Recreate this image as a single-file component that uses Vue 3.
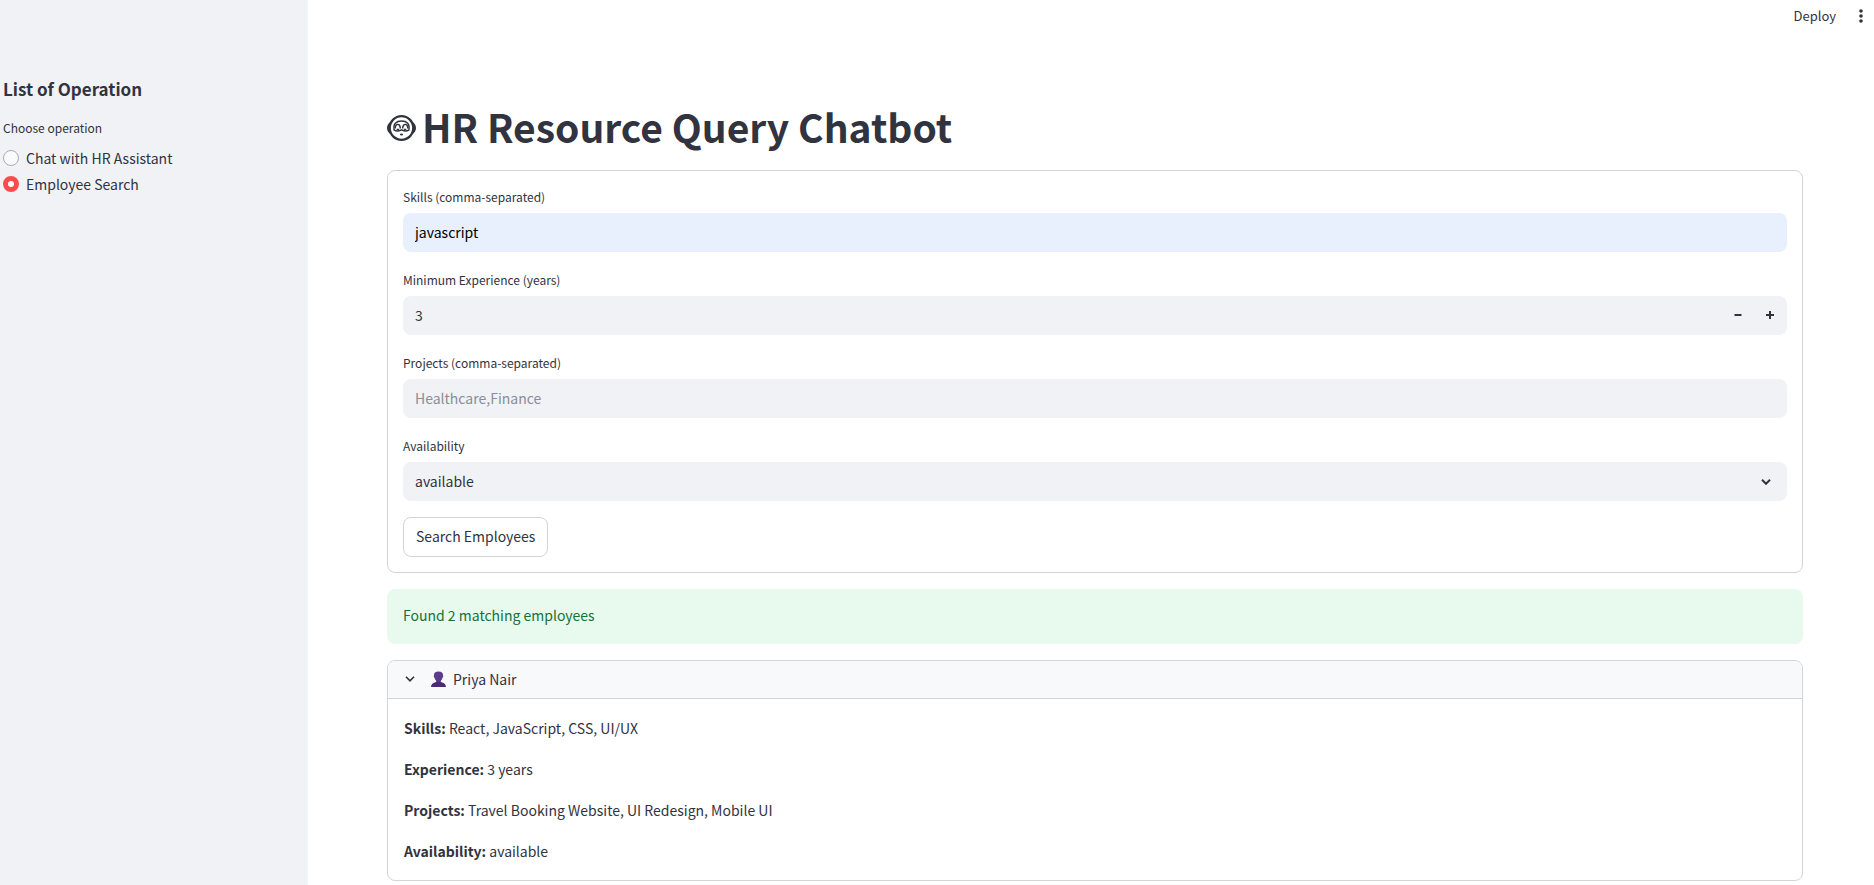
<script setup>
import { ref } from 'vue'

const operations = ['Chat with HR Assistant', 'Employee Search']
const operation = ref('Employee Search')
const skills = ref('javascript')
const experience = ref(3)
const projects = ref('')
const availability = ref('available')

const employees = [
  {
    name: 'Priya Nair',
    details: [
      ['Skills', 'React, JavaScript, CSS, UI/UX'],
      ['Experience', '3 years'],
      ['Projects', 'Travel Booking Website, UI Redesign, Mobile UI'],
      ['Availability', 'available']
    ]
  }
]
</script>

<template>
  <div class="app">
    <aside class="sidebar">
      <h2>List of Operation</h2>
      <fieldset class="operations">
        <legend>Choose operation</legend>
        <label v-for="item in operations" :key="item" class="option">
          <input v-model="operation" type="radio" name="operation" :value="item" />
          <span>{{ item }}</span>
        </label>
      </fieldset>
    </aside>

    <div class="page">
      <header class="toolbar">
        <button type="button" class="deploy">Deploy</button>
        <button type="button" class="menu" aria-label="Main menu">
          <svg width="6" height="16" viewBox="0 0 6 16" fill="currentColor">
            <circle cx="3" cy="3" r="1.8" />
            <circle cx="3" cy="8" r="1.8" />
            <circle cx="3" cy="13" r="1.8" />
          </svg>
        </button>
      </header>

      <main class="content">
        <h1>
          <svg class="robot" width="29" height="28" viewBox="0 0 30 28" fill="none" stroke="currentColor" aria-hidden="true">
            <path d="M4 7.500C1.200 9 0 11.500 0 14s1.200 5 4 6.500zM26 7.500c2.800 1.500 4 4 4 6.500s-1.200 5-4 6.500z" fill="currentColor" stroke="none" />
            <circle cx="15" cy="14" r="12.200" stroke-width="2.400" fill="#fff" />
            <path d="M7.500 16.300C6 9.500 9.500 6.800 15 6.800s9 2.700 7.500 9.500c-2 1.200-5.700.9-7.500-.3-1.800 1.200-5.500 1.500-7.500.3z" stroke-width="1.500" />
            <path d="M8.500 14.500v-.9c.3-4.500 4.900-4.500 5.200 0v.9M16.300 14.500v-.9c.3-4.500 4.900-4.500 5.200 0v.9" stroke-width="1.500" />
            <path d="M10 15.500h2.500M17.500 15.500H20" stroke-width="1.500" />
            <ellipse cx="15" cy="20.800" rx="1.600" ry="1" fill="currentColor" stroke="none" />
          </svg>
          <span>HR Resource Query Chatbot</span>
        </h1>

        <form class="search" @submit.prevent>
          <div class="fields">
            <div class="field">
              <label for="skills">Skills (comma-separated)</label>
              <input id="skills" v-model="skills" class="control filled" type="text" />
            </div>
            <div class="field">
              <label for="experience">Minimum Experience (years)</label>
              <div class="control stepper">
                <input id="experience" v-model="experience" type="number" min="0" />
                <button type="button" aria-label="Decrease" @click="experience--">
                  <svg width="8" height="8" viewBox="0 0 8 8"><path d="M.5 4h7" stroke="currentColor" stroke-width="2" /></svg>
                </button>
                <button type="button" aria-label="Increase" @click="experience++">
                  <svg width="8" height="8" viewBox="0 0 8 8"><path d="M0 4h8M4 0v8" stroke="currentColor" stroke-width="2" /></svg>
                </button>
              </div>
            </div>
            <div class="field">
              <label for="projects">Projects (comma-separated)</label>
              <input id="projects" v-model="projects" class="control" type="text" placeholder="Healthcare,Finance" />
            </div>
            <div class="field">
              <label for="availability">Availability</label>
              <div class="picker">
                <select id="availability" v-model="availability" class="control">
                  <option>available</option>
                  <option>unavailable</option>
                </select>
                <svg width="10" height="6" viewBox="0 0 10 6" fill="none" aria-hidden="true">
                  <path d="M1 .8l4 4 4-4" stroke="currentColor" stroke-width="2" />
                </svg>
              </div>
            </div>
          </div>
          <button type="submit" class="submit">Search Employees</button>
        </form>

        <p class="notice" role="status">Found 2 matching employees</p>

        <details v-for="person in employees" :key="person.name" class="employee" open>
          <summary>
            <svg class="arrow" width="10" height="6" viewBox="0 0 10 6" fill="none" aria-hidden="true">
              <path d="M1 .8l4 4 4-4" stroke="currentColor" stroke-width="1.600" />
            </svg>
            <svg class="person" width="15" height="16" viewBox="0 0 15 16" aria-hidden="true">
              <path d="M0 16c.2-3 1.600-4 4-4.600l1.300-.6V9h4.400v1.800l1.300.6c2.400.6 3.800 1.600 4 4.600z" fill="#4b2878" />
              <path d="M3 4.200C3 1.500 4.300.4 7.500.4S12 1.500 12 4.200c.5.800.2 1.900-.4 2.300C11 9 9.600 10.800 7.500 10.800S4 9 3.400 6.500C2.800 6.100 2.500 5 3 4.200z" fill="#5c3a8e" />
            </svg>
            <span>{{ person.name }}</span>
          </summary>
          <div class="details">
            <p v-for="[term, value] in person.details" :key="term"><strong>{{ term }}:</strong> {{ value }}</p>
          </div>
        </details>
      </main>
    </div>
  </div>
</template>

<style>
body {
  margin: 0;
  background: #fff;
}
</style>

<style scoped>
.app {
  display: flex;
  min-height: 100vh;
  color: #31333f;
  font-family: "Noto Sans CJK SC", "Noto Sans", sans-serif;
  font-size: 14px;
  line-height: 24px;
}

.app * {
  box-sizing: border-box;
}

button,
input,
select {
  margin: 0;
  color: inherit;
  font: inherit;
}

button {
  padding: 0;
  border: 0;
  background: none;
}

.sidebar {
  flex: 0 0 308px;
  padding: 77px 3px 0;
  background: #f0f2f6;
}

h2 {
  margin: 0;
  font-size: 17px;
  line-height: 24px;
}

.operations {
  margin: 16px 0 0;
  padding: 0;
  border: 0;
}

legend {
  padding: 0;
  font-size: 12px;
  line-height: 22px;
}

.option {
  display: flex;
  align-items: center;
  gap: 7px;
  margin-bottom: 2px;
}

legend + .option {
  margin-top: 7px;
}

.option input {
  width: 16px;
  height: 16px;
  appearance: none;
  border: 1px solid #a9abb3;
  border-radius: 50%;
  background: #fafafc;
}

.option input:checked {
  border: 5px solid #ff4b4b;
  background: #fff;
}

.page {
  flex: 1;
  min-width: 0;
}

.toolbar {
  display: flex;
  justify-content: flex-end;
  align-items: center;
  gap: 22px;
  height: 32px;
  padding-right: 10px;
}

.deploy {
  font-size: 13px;
}

.menu {
  display: flex;
}

.content {
  padding: 63px 71px 2px 79px;
}

h1 {
  display: flex;
  align-items: center;
  gap: 6px;
  margin: 0 0 13px;
  font-size: 39px;
  line-height: 62px;
}

.robot {
  margin-top: 4px;
}

.search {
  display: flex;
  flex-direction: column;
  align-items: flex-start;
  gap: 16px;
  padding: 16px 15px 15px;
  border: 1px solid #d3d4d8;
  border-radius: 8px;
}

.fields {
  display: flex;
  flex-direction: column;
  gap: 18px;
  width: 100%;
}

.field {
  display: flex;
  flex-direction: column;
  gap: 6px;
}

.field label {
  font-size: 12px;
  line-height: 20px;
}

.control {
  width: 100%;
  height: 39px;
  padding: 0 12px 2px;
  border: 0;
  border-radius: 8px;
  background: #f0f2f6;
}

.filled {
  background: #e8f0fe;
  color: #000;
}

.control::placeholder {
  color: #8b8d96;
  opacity: 1;
}

.stepper {
  display: flex;
  padding-right: 1px;
}

.stepper input {
  flex: 1;
  min-width: 0;
  padding: 0;
  border: 0;
  background: none;
  appearance: textfield;
}

.stepper input::-webkit-inner-spin-button {
  appearance: none;
}

.stepper button {
  display: flex;
  align-items: center;
  justify-content: center;
  width: 32px;
}

.picker {
  display: grid;
  align-items: center;
}

.picker > * {
  grid-area: 1 / 1;
}

.picker select {
  appearance: none;
}

.picker svg {
  justify-self: end;
  margin-right: 16px;
  pointer-events: none;
}

.submit {
  height: 40px;
  padding: 0 12px 2px;
  border: 1px solid #d3d4d8;
  border-radius: 8px;
  background: #fff;
}

.notice {
  margin: 16px 0;
  padding: 14px 16px 17px;
  border-radius: 8px;
  background: #e8f9ee;
  color: #177233;
}

.employee {
  overflow: hidden;
  border: 1px solid #d3d4d8;
  border-radius: 8px;
}

summary {
  display: flex;
  align-items: center;
  height: 37px;
  padding: 0 17px 1px;
  background: #f8f9fb;
  list-style: none;
}

.employee[open] summary {
  height: 38px;
  border-bottom: 1px solid #d3d4d8;
}

.person {
  margin: 0 7px 0 16px;
}

.details {
  display: flex;
  flex-direction: column;
  gap: 17px;
  padding: 17px 16px;
}

.details p {
  margin: 0;
}
</style>
